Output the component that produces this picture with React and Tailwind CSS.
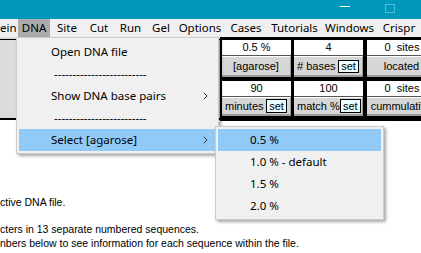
import React from "react";

const menuFont = { fontFamily: '"Noto Sans", "Open Sans", sans-serif' };

function Chevron() {
  return (
    <svg width="5" height="8" viewBox="0 0 5 8" className="block">
      <path d="M0.8 0.8 L4 4 L0.8 7.2" fill="none" stroke="#333" strokeWidth="1" />
    </svg>
  );
}

function SetBtn({ h = "h-[13px]" }) {
  return (
    <div className={`w-[21px] ${h} shrink-0 border border-black bg-[#eaffff] flex items-center justify-center text-[11px] leading-none text-black`}>
      set
    </div>
  );
}

function Cell({ w, value, label, labelJustify = "justify-center", labelH = "h-[21px]" }) {
  return (
    <div className={`${w} flex flex-col shrink-0`}>
      <div className="h-[16px] bg-white border-b border-[#555] flex items-center justify-center text-[11px] leading-none text-black whitespace-pre">
        {value}
      </div>
      <div className={`${labelH} bg-[#d6d6d6] border-t border-white border-b-2 border-b-[#9a9a9a] border-r border-r-[#9a9a9a] flex items-center ${labelJustify} px-[3px] text-[11px] leading-none text-black whitespace-nowrap overflow-hidden`}>
        {label}
      </div>
    </div>
  );
}

export default function App() {
  const items = [
    ["ein", "w-[18px] text-left", false],
    ["DNA", "w-[32px] text-center", true],
    ["Site", "w-[34px] text-center", false],
    ["Cut", "w-[30px] text-center", false],
    ["Run", "w-[33px] text-center", false],
    ["Gel", "w-[28px] text-center", false],
    ["Options", "w-[50px] text-center", false],
    ["Cases", "w-[42px] text-center", false],
    ["Tutorials", "w-[55px] text-center", false],
    ["Windows", "w-[55px] text-center", false],
    ["Crispr", "w-[44px] text-center", false],
  ];
  return (
    <div className="w-[421px] h-[253px] relative overflow-hidden bg-white" style={{ fontFamily: '"Liberation Sans", Arial, sans-serif' }}>
      {/* title bar */}
      <div className="h-[19px] bg-[#0099bc] flex items-center pl-[340px] gap-[35px]">
        <div className="w-[10px] h-[1px] bg-white mt-[-6px]" />
        <div className="w-[10px] h-[9px] border border-[#4fbcd8] mt-[-3px]" />
      </div>
      {/* menu bar */}
      <div className="h-[18px] bg-[#f0f0f0] flex text-[11.5px] text-black whitespace-nowrap overflow-hidden" style={menuFont}>
        {items.map(([t, cls, active]) => (
          <div key={t} className={`${cls} shrink-0 leading-[18px] ${active ? "bg-[#ababab]" : ""}`}>
            {t}
          </div>
        ))}
      </div>
      {/* panel */}
      <div className="h-[84px] flex">
        <div className="w-[220px] flex flex-col shrink-0">
          <div className="h-[2px] bg-[#dcdcdc]" />
          <div className="h-[1px] bg-black" />
          <div className="flex-1 bg-[#dcdcdc]" />
          <div className="h-[2px] bg-black" />
          <div className="h-[1px] bg-white" />
        </div>
        <div className="flex-1 bg-black pt-[3px] pl-[2px] overflow-hidden flex flex-col gap-[4px]">
          <div className="flex gap-[3px]">
            <Cell w="w-[69px]" value="0.5 %" label="[agarose]" />
            <div className="flex gap-[4px]">
              <Cell w="w-[69px]" value="4" label={<><span># bases</span><SetBtn /></>} labelJustify="justify-between" />
              <Cell w="w-[70px]" value="0  sites" label="located" />
            </div>
          </div>
          <div className="flex gap-[3px]">
            <Cell w="w-[69px]" value="90" label={<><span>minutes</span><SetBtn h="h-[14px]" /></>} labelJustify="justify-between" labelH="h-[19px]" />
            <div className="flex gap-[4px]">
              <Cell w="w-[69px]" value="100" label={<><span>match %</span><SetBtn h="h-[14px]" /></>} labelJustify="justify-between" labelH="h-[19px]" />
              <Cell w="w-[70px]" value="0  sites" label="cummulative" labelH="h-[19px]" />
            </div>
          </div>
        </div>
      </div>
      {/* body text */}
      <div className="pt-[74px] text-[10.5px] leading-[14px] text-black whitespace-nowrap">
        <div>ctive DNA file.</div>
        <div className="mt-[13px]">cters in 13 separate numbered sequences.</div>
        <div>nbers below to see information for each sequence within the file.</div>
      </div>

      {/* DNA dropdown menu */}
      <div className="absolute left-[16px] top-[37px] w-[203px] h-[117px] bg-[#f0f0f0] border border-[#cccccc] px-[2px] pt-[3px] pb-[2px] shadow-[2px_2px_3px_rgba(0,0,0,0.35)] text-[11.5px] text-black" style={menuFont}>
        <div className="h-[22px] flex items-center pl-[32px]">Open DNA file</div>
        <div className="h-[22px] flex items-center pl-[35px]">-------------------------</div>
        <div className="h-[22px] flex items-center justify-between pl-[32px] pr-[8px]">
          <span>Show DNA base pairs</span>
          <Chevron />
        </div>
        <div className="h-[22px] flex items-center pl-[35px]">-------------------------</div>
        <div className="h-[22px] flex items-center justify-between pl-[32px] pr-[8px] bg-[#91c9f7]">
          <span>Select [agarose]</span>
          <Chevron />
        </div>
      </div>

      {/* agarose submenu */}
      <div className="absolute left-[215px] top-[126px] w-[169px] h-[94px] bg-[#f0f0f0] border border-[#cccccc] p-[2px] shadow-[2px_2px_3px_rgba(0,0,0,0.35)] text-[11.5px] text-black" style={menuFont}>
        <div className="h-[22px] flex items-center pl-[32px] bg-[#91c9f7]">0.5 %</div>
        <div className="h-[22px] flex items-center pl-[32px]">1.0 % - default</div>
        <div className="h-[22px] flex items-center pl-[32px]">1.5 %</div>
        <div className="h-[22px] flex items-center pl-[32px]">2.0 %</div>
      </div>
    </div>
  );
}
